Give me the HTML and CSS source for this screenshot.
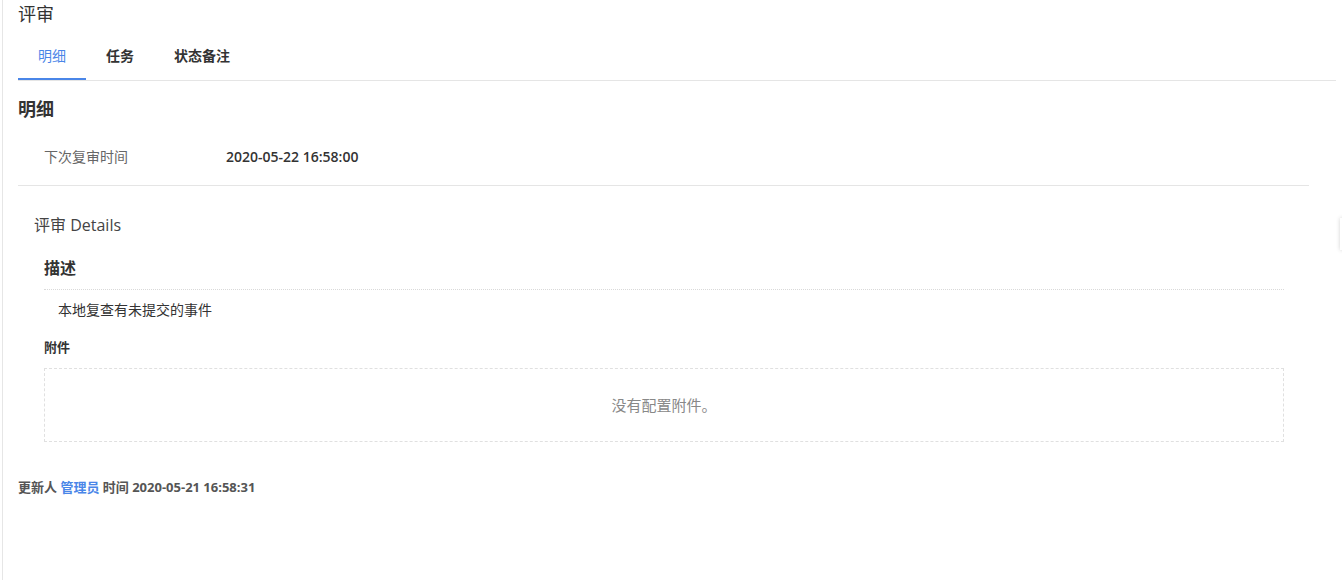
FILE: index.html
```html
<!DOCTYPE html>
<html>
<head>
  <meta charset="utf-8">
  <title>评审</title>
  <link rel="stylesheet" href="styles.css">
</head>
<body>
  <div class="page">
    <div class="page-title">评审</div>

    <div class="tabs">
      <div class="tab active">明细</div>
      <div class="tab">任务</div>
      <div class="tab">状态备注</div>
    </div>

    <h2 class="section-title">明细</h2>
    <div class="field-row">
      <div class="field-label">下次复审时间</div>
      <div class="field-value">2020-05-22 16:58:00</div>
    </div>

    <div class="details">
      <div class="details-title">评审 Details</div>
      <div class="details-body">
        <h3 class="block-title">描述</h3>
        <div class="block-text">本地复查有未提交的事件</div>
        <div class="attach-label">附件</div>
        <div class="attach-box">没有配置附件。</div>
      </div>
    </div>

    <div class="footer">更新人 <span class="user">管理员</span> 时间 2020-05-21 16:58:31</div>

    <!-- little side handle on the right edge -->
    <div class="side-handle"></div>
  </div>
</body>
</html>
```

FILE: styles.css
```css
body {
  margin: 0;
  background: #fff;
  font-family: "Open Sans", "Noto Sans CJK SC", sans-serif;
  color: #333;
}

.page {
  position: relative;
  margin-left: 2px;
  min-height: 580px;
  box-sizing: border-box;
  border-left: 1px solid #e6e6e6;
  padding: 2px 6px 0 15px;
}

.page-title {
  font-size: 18px;
  line-height: 24px;
  color: #333;
}

/* tab strip */
.tabs {
  display: flex;
  margin-top: 6px;
  height: 48px;
  border-bottom: 1px solid #e5e5e5;
}

.tab {
  padding: 0 20px;
  line-height: 48px;
  font-size: 14px;
  font-weight: 700;
  color: #333;
}

.tab.active {
  font-weight: 400;
  color: #4a86e8;
  box-shadow: inset 0 -2px 0 #4a86e8;
}

.section-title {
  margin: 16px 0 0;
  font-size: 18px;
  line-height: 24px;
  font-weight: 700;
  color: #333;
}

.field-row {
  display: flex;
  margin: 14px 27px 0 0;
  padding: 12px 0 18px 26px;
  border-bottom: 1px solid #e5e5e5;
  font-size: 14px;
  line-height: 20px;
}

.field-label {
  width: 182px;
  color: #666;
}

.field-value {
  font-weight: 600;
  color: #333;
}

/* details block */
.details {
  margin-right: 52px;
  padding-left: 16px;
}

.details-title {
  margin-top: 28px;
  font-size: 16px;
  line-height: 22px;
  color: #444;
}

.details-body {
  padding-left: 10px;
}

.block-title {
  margin: 21px 0 0;
  padding-bottom: 10px;
  border-bottom: 1px dotted #d9d9d9;
  font-size: 16px;
  line-height: 22px;
  font-weight: 600;
  color: #333;
}

.block-text {
  margin-top: 10px;
  padding-left: 14px;
  font-size: 14px;
  line-height: 20px;
  color: #333;
}

.attach-label {
  margin-top: 18px;
  font-size: 13px;
  line-height: 18px;
  font-weight: 700;
  color: #333;
}

.attach-box {
  margin-top: 12px;
  height: 72px;
  border: 1px dashed #e0e0e0;
  text-align: center;
  line-height: 72px;
  font-size: 15px;
  color: #888;
}

.footer {
  margin-top: 36px;
  font-size: 13px;
  line-height: 18px;
  font-weight: 700;
  color: #555;
}

.footer .user {
  color: #4a86e8;
}

.side-handle {
  position: absolute;
  top: 218px;
  right: -4px;
  width: 6px;
  height: 32px;
  background: #fff;
  box-shadow: 0 0 4px rgba(0, 0, 0, 0.18);
}
```
